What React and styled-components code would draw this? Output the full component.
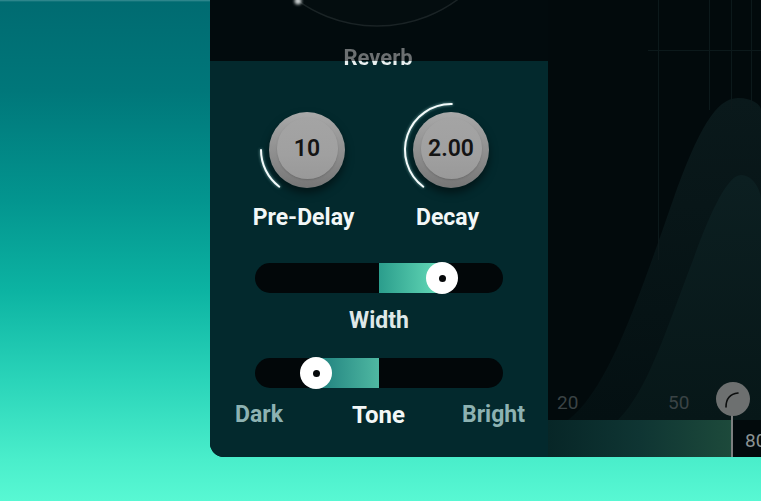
import React from "react";
import styled, { createGlobalStyle } from "styled-components";

const Global = createGlobalStyle`
  html, body { margin: 0; padding: 0; }
  body {
    font-family: Roboto, "Liberation Sans", sans-serif;
    overflow: hidden;
  }
`;

const Page = styled.div`
  width: 761px;
  height: 501px;
  display: flex;
  align-items: flex-start;
  padding-left: 210px;
  box-sizing: border-box;
  background: linear-gradient(180deg, #3b8f95 0px, #006b71 2px, #00777a 90px, #03958f 200px, #0cb3a2 290px, #2ad4b9 380px, #4aeecb 460px, #58f8d3 501px);
`;

const Window = styled.div`
  flex: 1;
  height: 457px;
  display: flex;
  overflow: hidden;
  border-bottom-left-radius: 14px;
  background: #020a0c;
`;

const LeftCol = styled.div`
  width: 338px;
  display: grid;
  grid-template-rows: 61px 1fr;
  grid-template-columns: 1fr;
`;

const TopStrip = styled.div`
  grid-row: 1;
  grid-column: 1;
  background: #020b0d;
  overflow: hidden;
`;

const Title = styled.div`
  grid-row: 1 / span 2;
  grid-column: 1;
  justify-self: center;
  align-self: start;
  margin-top: 46px;
  margin-right: 2px;
  font-size: 22px;
  font-weight: 700;
  line-height: 23px;
  z-index: 1;
  background: linear-gradient(180deg, #6c7071 0px, #6c7071 15px, #e9f0f0 15px);
  -webkit-background-clip: text;
  background-clip: text;
  color: transparent;
`;

const Panel = styled.div`
  grid-row: 2;
  grid-column: 1;
  background: #03292d;
  display: flex;
  flex-direction: column;
  align-items: center;
  padding-top: 39px;
`;

const KnobRow = styled.div`
  display: flex;
  gap: 44px;
`;

const KnobGroup = styled.div`
  width: 100px;
  display: flex;
  flex-direction: column;
  align-items: center;
  gap: 5px;
`;

const KnobWrap = styled.div`
  position: relative;
  width: 100px;
  height: 100px;
  display: flex;
  align-items: center;
  justify-content: center;
`;

const ArcSvg = styled.svg`
  position: absolute;
  inset: 0;
  overflow: visible;
`;

const KnobOuter = styled.div`
  width: 76px;
  height: 76px;
  border-radius: 50%;
  background: linear-gradient(180deg, #a9a9a9 0%, #8e8e8e 55%, #767676 100%);
  box-shadow: 0 5px 9px rgba(0, 0, 0, 0.5);
  display: flex;
  align-items: center;
  justify-content: center;
`;

const KnobInner = styled.div`
  width: 61px;
  height: 61px;
  margin-top: -3px;
  border-radius: 50%;
  background: linear-gradient(180deg, #a4a4a4 0%, #a0a0a0 60%, #999 100%);
  box-shadow: 0 1px 2px rgba(0,0,0,0.15);
  display: flex;
  align-items: center;
  justify-content: center;
  font-size: 23px;
  font-weight: 600;
  color: #141414;
`;

const Label = styled.div`
  font-size: 23px;
  font-weight: 700;
  line-height: 26px;
  white-space: nowrap;
  color: ${(p) => p.$color || "#f2f7f7"};
`;

const KnobLabel = styled(Label)`
  padding-right: 7px;
`;

const Track = styled.div`
  position: relative;
  width: 248px;
  height: 30px;
  border-radius: 15px;
  background: #020709;
  margin-top: ${(p) => p.$mt}px;
`;

const Fill = styled.div`
  position: absolute;
  top: 0;
  bottom: 0;
  background: linear-gradient(90deg, ${(p) => p.$from}, ${(p) => p.$to});
`;

const Thumb = styled.div`
  position: absolute;
  top: 50%;
  width: 32px;
  height: 32px;
  margin: -16px 0 0 -16px;
  border-radius: 50%;
  background: #ffffff;
  display: flex;
  align-items: center;
  justify-content: center;
  &::after {
    content: "";
    width: 7px;
    height: 7px;
    border-radius: 50%;
    background: #06080a;
  }
`;

const SliderLabel = styled(Label)`
  margin-top: 15px;
`;

const ToneRow = styled.div`
  width: 290px;
  display: grid;
  grid-template-columns: 1fr auto 1fr;
  margin-top: 14px;
  margin-left: 2px;
  & > :first-child { justify-self: start; }
  & > :last-child { justify-self: end; }
`;

const ToneLabel = styled(Label)`
  font-size: 24px;
  padding-right: 3px;
`;

const Chart = styled.div`
  position: relative;
  flex: 1;
  display: flex;
  flex-direction: column;
  justify-content: flex-end;
  background: #020a0c;
`;

const PlotSvg = styled.svg`
  position: absolute;
  inset: 0;
`;

const Band = styled.div`
  position: relative;
  height: 37px;
  width: ${(p) => p.$w}px;
  background: linear-gradient(90deg, #072627 0%, #0f3533 50%, #1d4a3b 100%);
`;

const AxisLabel = styled.span`
  position: absolute;
  font-size: 19px;
  font-weight: 400;
  line-height: 20px;
  color: ${(p) => p.$color};
`;

const Handle = styled.div`
  position: absolute;
  left: 168px;
  top: 382px;
  width: 34px;
  height: 34px;
  border-radius: 50%;
  background: #6d7070;
  display: flex;
  align-items: center;
  justify-content: center;
`;

const HandleLine = styled.div`
  position: absolute;
  left: 183px;
  top: 414px;
  width: 2px;
  height: 43px;
  background: #7c7f7f;
`;

function arcPath(cx, cy, r, a0, a1) {
  const rad = (d) => (d * Math.PI) / 180;
  const x0 = cx + r * Math.cos(rad(a0));
  const y0 = cy + r * Math.sin(rad(a0));
  const x1 = cx + r * Math.cos(rad(a1));
  const y1 = cy + r * Math.sin(rad(a1));
  const large = a1 - a0 > 180 ? 1 : 0;
  return `M ${x0} ${y0} A ${r} ${r} 0 ${large} 1 ${x1} ${y1}`;
}

function Knob({ value, label, end }) {
  return (
    <KnobGroup>
      <KnobWrap>
        <ArcSvg width="100" height="100" viewBox="0 0 100 100">
          <path
            d={arcPath(50, 50, 46, 127, end)}
            fill="none"
            stroke="#f4fbfb"
            strokeWidth="2"
            strokeLinecap="round"
            style={{ filter: "drop-shadow(0 0 1.5px rgba(200,255,250,0.6))" }}
          />
        </ArcSvg>
        <KnobOuter>
          <KnobInner>{value}</KnobInner>
        </KnobOuter>
      </KnobWrap>
      <KnobLabel>{label}</KnobLabel>
    </KnobGroup>
  );
}

function Slider({ thumb, from, to, mt }) {
  const center = 124;
  const left = Math.min(center, thumb);
  const width = Math.abs(thumb - center);
  return (
    <Track $mt={mt}>
      <Fill $from={from} $to={to} style={{ left, width }} />
      <Thumb style={{ left: thumb }} />
    </Track>
  );
}

export default function App() {
  return (
    <>
      <Global />
      <Page>
        <Window>
          <LeftCol>
            <TopStrip>
              <svg width="338" height="61" viewBox="0 0 338 61">
                <circle cx="167" cy="-110" r="136" fill="#040d0f" stroke="#1a2325" strokeWidth="1.5" />
                <circle cx="88" cy="1" r="3.5" fill="#c9cfcf" style={{ filter: "blur(1.5px)" }} />
              </svg>
            </TopStrip>
            <Title>Reverb</Title>
            <Panel>
              <KnobRow>
                <Knob value="10" label="Pre-Delay" end={180} />
                <Knob value="2.00" label="Decay" end={271} />
              </KnobRow>
              <Slider thumb={187} from="#2b9d8c" to="#66dcb9" mt={32} />
              <SliderLabel $color="#dfe8e8">Width</SliderLabel>
              <Slider thumb={61} from="#1e7f7d" to="#4fb8a2" mt={24} />
              <ToneRow>
                <Label $color="#8db2b2">Dark</Label>
                <ToneLabel>Tone</ToneLabel>
                <Label $color="#8db2b2">Bright</Label>
              </ToneRow>
            </Panel>
          </LeftCol>
          <Chart>
            <PlotSvg width="213" height="457" viewBox="0 0 213 457">
              <defs>
                <linearGradient id="outerG" x1="0" y1="0" x2="0" y2="1">
                  <stop offset="0" stopColor="#0a191b" />
                  <stop offset="1" stopColor="#041012" />
                </linearGradient>
                <linearGradient id="innerG" x1="0" y1="0" x2="0" y2="1">
                  <stop offset="0" stopColor="#0c1f21" />
                  <stop offset="1" stopColor="#071718" />
                </linearGradient>
              </defs>
              <path d="M20 420 C 60 390, 90 300, 125 200 C 150 130, 168 98, 190 98 C 205 98, 213 105, 213 110 L 213 420 Z" fill="url(#outerG)" />
              <path d="M70 420 C 100 390, 118 330, 145 260 C 163 210, 180 175, 193 175 C 205 175, 213 190, 213 200 L 213 420 Z" fill="url(#innerG)" />
              <g stroke="#0c191b" strokeWidth="1">
                <line x1="110.5" y1="0" x2="110.5" y2="260" />
                <line x1="161.5" y1="0" x2="161.5" y2="110" />
                <line x1="183.5" y1="0" x2="183.5" y2="110" />
                <line x1="203.5" y1="0" x2="203.5" y2="110" />
                <line x1="100" y1="50.5" x2="213" y2="50.5" />
              </g>
            </PlotSvg>
            <AxisLabel $color="#3a4345" style={{ left: 9, top: 393 }}>20</AxisLabel>
            <AxisLabel $color="#3a4345" style={{ left: 120, top: 393 }}>50</AxisLabel>
            <AxisLabel $color="#8b9393" style={{ left: 197, top: 431 }}>80</AxisLabel>
            <Band $w={184} />
            <HandleLine />
            <Handle>
              <svg width="34" height="34" viewBox="0 0 34 34">
                <path d="M10 25 C 10 17, 14 12, 22 11" fill="none" stroke="#0c0e0e" strokeWidth="1.6" strokeLinecap="round" />
              </svg>
            </Handle>
          </Chart>
        </Window>
      </Page>
    </>
  );
}
